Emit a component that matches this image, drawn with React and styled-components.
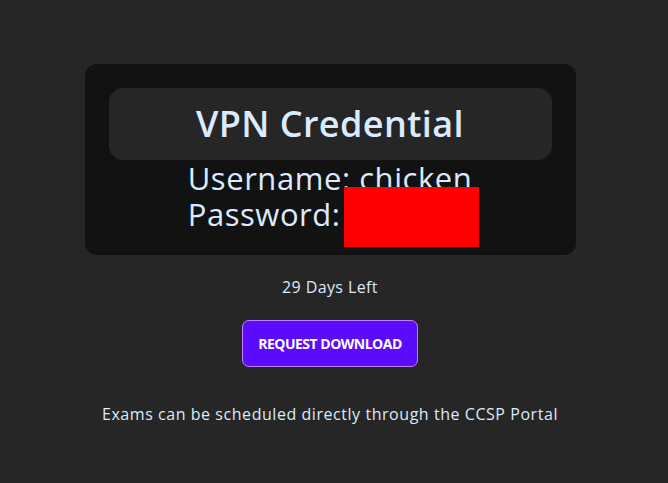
import React from "react";
import styled, { createGlobalStyle } from "styled-components";

const Global = createGlobalStyle`
  html, body { margin: 0; padding: 0; background: #262626; }
  body { font-family: "Open Sans", "DejaVu Sans", sans-serif; color: #dbeafe; }
`;

const Page = styled.main`
  min-height: 483px;
  box-sizing: border-box;
  padding: 64px 8px 0 0;
  display: flex;
  flex-direction: column;
  align-items: center;
`;

const Card = styled.section`
  width: 491px;
  box-sizing: border-box;
  background: #121212;
  border-radius: 12px;
  padding: 24px 24px 23px;
  display: flex;
  flex-direction: column;
  align-items: center;
`;

const TitleBox = styled.div`
  align-self: stretch;
  height: 72px;
  background: #262626;
  border-radius: 14px;
  display: flex;
  align-items: center;
  justify-content: center;
`;

const Title = styled.h1`
  margin: 0;
  font-size: 36px;
  line-height: 40px;
  font-weight: 600;
  letter-spacing: 0.4px;
  color: #dbeafe;
`;

const Credentials = styled.div`
  position: relative;
  font-size: 31px;
  line-height: 36px;
  font-weight: 400;
  letter-spacing: 0.55px;
  text-align: left;
`;

const Line = styled.div`
  white-space: nowrap;
`;

const Redaction = styled.span`
  position: absolute;
  left: 156px;
  top: 27px;
  width: 135px;
  height: 60px;
  background: #ff0000;
`;

const Days = styled.p`
  margin: 20px 0 0;
  font-size: 16px;
  line-height: 24px;
  letter-spacing: 0.4px;
`;

const Button = styled.button`
  margin-top: 21px;
  width: 176px;
  height: 47px;
  background: #5b0cff;
  border: 1px solid #c77dff;
  border-radius: 7px;
  color: #ffffff;
  font-family: "Open Sans", "DejaVu Sans", sans-serif;
  font-weight: 700;
  font-size: 14px;
  letter-spacing: -0.5px;
  text-transform: uppercase;
  cursor: pointer;
`;

const Note = styled.p`
  margin: 35px 0 0;
  font-size: 16px;
  line-height: 24px;
  letter-spacing: 0.55px;
`;

export default function App() {
  return (
    <>
      <Global />
      <Page>
        <Card>
          <TitleBox>
            <Title>VPN Credential</Title>
          </TitleBox>
          <Credentials>
            <Line>Username: chicken</Line>
            <Line>Password: </Line>
            <Redaction aria-hidden="true" />
          </Credentials>
        </Card>
        <Days>29 Days Left</Days>
        <Button>Request Download</Button>
        <Note>Exams can be scheduled directly through the CCSP Portal</Note>
      </Page>
    </>
  );
}
